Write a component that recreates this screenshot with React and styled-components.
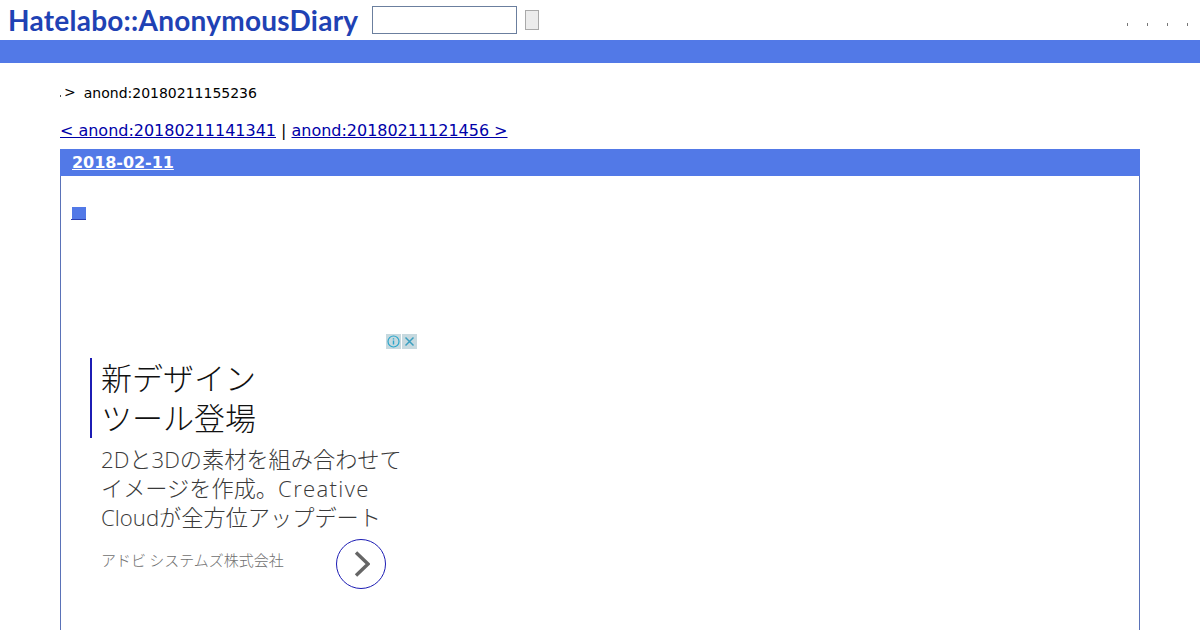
import React from 'react';
import styled, {createGlobalStyle} from 'styled-components';

const Global = createGlobalStyle`
    html, body {
        margin: 0;
        padding: 0;
        height: 630px;
        overflow: hidden;
        background: #FFFFFF;
        font-family: "DejaVu Sans", sans-serif;
    }
`

const Header = styled.div`
    display: flex;
    align-items: center;
    height: 40px;
    padding-left: 8px;
    padding-right: 12px;
`

const Logo = styled.h1`
    margin: 0;
    width: 350px;
    font-family: Lato, sans-serif;
    font-weight: 700;
    font-size: 28px;
    line-height: 40px;
    letter-spacing: 0.25px;
    white-space: nowrap;
    color: #1f42b4;
`

const SearchInput = styled.input`
    box-sizing: border-box;
    width: 145px;
    height: 28px;
    margin-left: 14px;
    margin-bottom: 1px;
    padding: 0;
    background: #FFFFFF;
    border: 1px solid #6b7f9e;
`

const SearchButton = styled.button`
    box-sizing: border-box;
    width: 14px;
    height: 20px;
    margin-left: 8px;
    margin-bottom: 1px;
    padding: 0;
    background: #ececec;
    border: 1px solid #a9a9a9;
`

const HeaderLinks = styled.div`
    display: flex;
    gap: 19px;
    margin-left: auto;
    margin-top: 8px;
`

const Dot = styled.span`
    width: 1px;
    height: 3px;
    background: #777777;
`

const Band = styled.div`
    height: 23px;
    background: #5279e7;
`

const Main = styled.div`
    padding: 0 60px;
`

const Breadcrumb = styled.div`
    display: flex;
    align-items: center;
    height: 20px;
    margin-top: 20px;
    font-size: 14px;
    color: #000000;
`

const Arrow = styled.span`
    margin-left: 3px;
    margin-right: 8px;
    margin-bottom: 2px;
`

const TinyDot = styled.span`
    width: 1px;
    height: 2px;
    margin-top: 6px;
    background: #555555;
`

const Pager = styled.div`
    margin-top: 18px;
    height: 19px;
    font-size: 16px;
    line-height: 19px;
    letter-spacing: -0.02px;
    color: #000000;
    white-space: nowrap;
`

const PagerLink = styled.a`
    color: #0000a8;
    text-decoration: underline;
`

const Day = styled.div`
    box-sizing: border-box;
    margin-top: 9px;
    height: 500px;
    border: 1px solid #5a72b8;
    border-top: none;
`

const DayTitle = styled.div`
    height: 27px;
    margin: 0 -1px;
    padding-left: 12px;
    background: #5279e7;
    font-size: 16px;
    font-weight: 700;
    line-height: 27px;
    letter-spacing: -0.05px;
`

const DayLink = styled.a`
    color: #FFFFFF;
    text-decoration: underline;
`

const Section = styled.div`
    padding: 28px 0 0 10px;
`

const Square = styled.a`
    display: block;
    width: 15px;
    height: 16px;
    border-bottom: 1px solid #2a3fb0;
    box-sizing: border-box;
    padding: 3px 0 0 1px;
`

const SquareFill = styled.span`
    display: block;
    width: 14px;
    height: 12px;
    background: #5279e7;
`

const Ad = styled.div`
    position: relative;
    box-sizing: border-box;
    width: 336px;
    margin-top: 114px;
    margin-left: -10px;
    padding: 24px 0 0 29px;
    font-family: "Noto Sans CJK JP", sans-serif;
`

const AdBadge = styled.div`
    position: absolute;
    top: 0;
    left: 325px;
    display: flex;
    gap: 1px;
`

const AdBadgeCell = styled.span`
    display: flex;
    width: 15px;
    height: 15px;
    background: #c6d9df;
`

const Headline = styled.div`
    display: flow-root;
    box-sizing: border-box;
    width: 300px;
    height: 80px;
    padding-left: 9px;
    border-left: 2px solid #1c1cb4;
    font-size: 31px;
    font-weight: 300;
    line-height: 40px;
    color: #111111;
    white-space: nowrap;
`

const HeadlineText = styled.div`
    margin-top: -1px;
`

const Body = styled.div`
    width: 310px;
    margin-top: 7px;
    padding-left: 11px;
    font-family: "Open Sans", "Noto Sans CJK JP", sans-serif;
    font-size: 22.2px;
    font-weight: 300;
    line-height: 29px;
    color: #3a3a3a;
    white-space: nowrap;
`

const Latin = styled.span`
    letter-spacing: 1.3px;
`

const AdFooter = styled.div`
    display: flex;
    align-items: center;
    width: 285px;
    margin-top: 7px;
    padding-left: 11px;
`

const Advertiser = styled.span`
    font-size: 15px;
    font-weight: 300;
    line-height: 20px;
    margin-bottom: 8px;
    color: #6f6f6f;
    white-space: nowrap;
`

const Round = styled.span`
    display: flex;
    align-items: center;
    justify-content: center;
    box-sizing: border-box;
    width: 50px;
    height: 50px;
    margin-left: auto;
    border: 1px solid #1c1cb4;
    border-radius: 50%;
`

export default function App() {
    return (
        <>
            <Global />
            <Header>
                <Logo>Hatelabo::AnonymousDiary</Logo>
                <SearchInput />
                <SearchButton />
                <HeaderLinks>
                    <Dot /><Dot /><Dot /><Dot />
                </HeaderLinks>
            </Header>
            <Band />
            <Main>
                <Breadcrumb>
                    <TinyDot />
                    <Arrow>&gt;</Arrow>
                    anond:20180211155236
                </Breadcrumb>
                <Pager>
                    <PagerLink href="#">&lt; anond:20180211141341</PagerLink>
                    {' | '}
                    <PagerLink href="#">anond:20180211121456 &gt;</PagerLink>
                </Pager>
                <Day>
                    <DayTitle><DayLink href="#">2018-02-11</DayLink></DayTitle>
                    <Section>
                        <Square href="#"><SquareFill /></Square>
                        <Ad>
                            <AdBadge>
                                <AdBadgeCell>
                                    <svg width="15" height="15" viewBox="0 0 15 15" fill="none">
                                        <circle cx="7.5" cy="7.5" r="5.5" stroke="#2ba6cb" strokeWidth="1.2" />
                                        <path d="M7.5 6.5v4M7.5 4.2v1.2" stroke="#2ba6cb" strokeWidth="1.4" />
                                    </svg>
                                </AdBadgeCell>
                                <AdBadgeCell>
                                    <svg width="15" height="15" viewBox="0 0 15 15" fill="none">
                                        <path d="M3.5 3.5l8 8M11.5 3.5l-8 8" stroke="#3a9fc0" strokeWidth="1.5" />
                                    </svg>
                                </AdBadgeCell>
                            </AdBadge>
                            <Headline>
                                <HeadlineText>新デザイン<br />ツール登場</HeadlineText>
                            </Headline>
                            <Body>
                                2Dと3Dの素材を組み合わせて<br />
                                イメージを作成。<Latin>Creative</Latin><br />
                                Cloudが全方位アップデート
                            </Body>
                            <AdFooter>
                                <Advertiser>アドビ システムズ株式会社</Advertiser>
                                <Round>
                                    <svg width="18" height="26" viewBox="0 0 18 26" fill="none">
                                        <path d="M4 1.5l12 11.5L4 24.5" stroke="#666666" strokeWidth="3.4" />
                                    </svg>
                                </Round>
                            </AdFooter>
                        </Ad>
                    </Section>
                </Day>
            </Main>
        </>
    );
}
